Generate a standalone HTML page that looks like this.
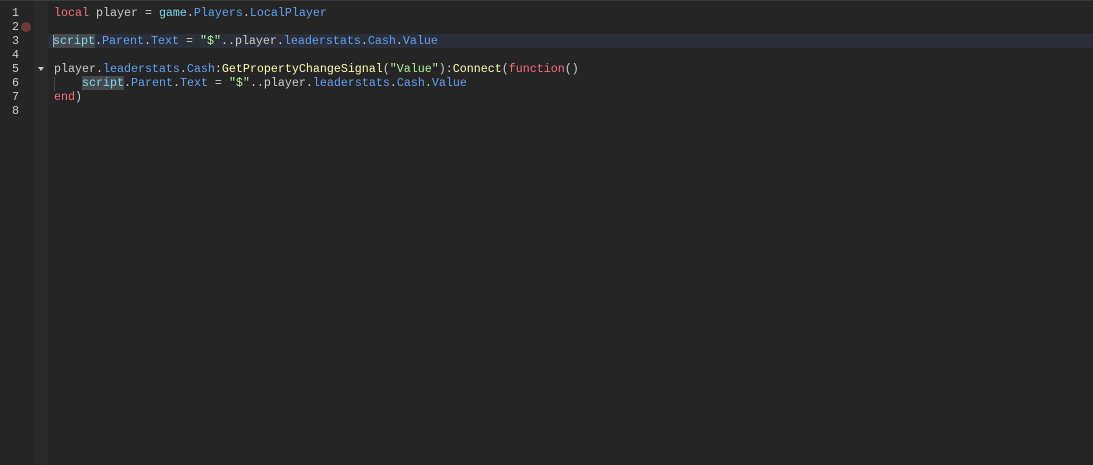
<!DOCTYPE html>
<html><head><style>
html,body{margin:0;padding:0;width:1093px;height:465px;overflow:hidden;background:#252525;}
body{position:relative;font-family:"Liberation Mono",monospace;font-size:11.67px;}
.g1{position:absolute;left:0;top:0;width:34px;height:465px;background:#252526;}
.g2{position:absolute;left:34px;top:0;width:14px;height:465px;background:#2a2a2a;}
.top{position:absolute;left:0;top:0;width:1093px;height:1px;background:#3a3a3a;}
.hl{position:absolute;left:48px;top:34px;width:1045px;height:14px;background:#2a2f3a;}
.ln{position:absolute;left:0;width:19px;text-align:right;color:#cccccc;height:14px;line-height:14px;}
.c{position:absolute;left:54px;height:14px;line-height:14px;white-space:pre;color:#cccccc;}
.k{color:#f86d7c}.b{color:#61a1f1}.g{color:#84d6f7}.s{color:#adf195}.y{color:#fdfbac}
.sc{color:#84d6f7;background:#454a4c}
.dot{position:absolute;left:21px;top:22px;width:10px;height:10px;border-radius:50%;background:#6b3a3a;}
.tri{position:absolute;left:38px;top:67px;width:0;height:0;border-left:3.5px solid transparent;border-right:3.5px solid transparent;border-top:4px solid #cccccc;}
.cur{position:absolute;left:53px;top:35px;width:1px;height:12px;background:#aaa;}
.ind{position:absolute;left:54px;top:77px;width:1px;height:14px;background:#444;}
</style></head><body>
<div class="g1"></div><div class="g2"></div><div class="top"></div>
<div class="hl"></div>
<div class="ln" style="top:6px">1</div>
<div class="ln" style="top:20px">2</div>
<div class="ln" style="top:34px">3</div>
<div class="ln" style="top:48px">4</div>
<div class="ln" style="top:62px">5</div>
<div class="ln" style="top:76px">6</div>
<div class="ln" style="top:90px">7</div>
<div class="ln" style="top:104px">8</div>
<div class="dot"></div><div class="tri"></div>
<div class="c" style="top:6px"><span class="k">local</span> player = <span class="g">game</span>.<span class="b">Players</span>.<span class="b">LocalPlayer</span></div>
<div class="c" style="top:34px;left:53px"><span class="sc">script</span>.<span class="b">Parent</span>.<span class="b">Text</span> = <span class="s">"$"</span>..player.<span class="b">leaderstats</span>.<span class="b">Cash</span>.<span class="b">Value</span></div>
<div class="c" style="top:62px">player.<span class="b">leaderstats</span>.<span class="b">Cash</span>:<span class="y">GetPropertyChangeSignal</span>(<span class="s">"Value"</span>):<span class="y">Connect</span>(<span class="k">function</span>()</div>
<div class="c" style="top:76px">    <span class="sc">script</span>.<span class="b">Parent</span>.<span class="b">Text</span> = <span class="s">"$"</span>..player.<span class="b">leaderstats</span>.<span class="b">Cash</span>.<span class="b">Value</span></div>
<div class="c" style="top:90px"><span class="k">end</span>)</div>
<div class="cur"></div><div class="ind"></div>
</body></html>
